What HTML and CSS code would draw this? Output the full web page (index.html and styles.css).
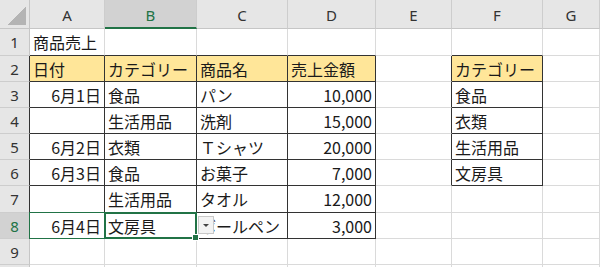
FILE: index.html
```html
<!DOCTYPE html>
<html lang="ja">
<head>
<meta charset="utf-8">
<title>商品売上</title>
<link rel="stylesheet" href="styles.css">
</head>
<body>
<div class="sheet">
  <!-- column headers -->
  <div class="corner"><span class="tri"></span></div>
  <div class="ch">A</div>
  <div class="ch active">B</div>
  <div class="ch">C</div>
  <div class="ch">D</div>
  <div class="ch">E</div>
  <div class="ch">F</div>
  <div class="ch">G</div>

  <!-- row 1 -->
  <div class="rh">1</div>
  <div class="c bb">商品売上</div>
  <div class="c bb"></div>
  <div class="c bb"></div>
  <div class="c bb"></div>
  <div class="c"></div>
  <div class="c bb"></div>
  <div class="c"></div>

  <!-- row 2 -->
  <div class="rh br">2</div>
  <div class="c b head">日付</div>
  <div class="c b head">カテゴリー</div>
  <div class="c b head">商品名</div>
  <div class="c b head">売上金額</div>
  <div class="c br"></div>
  <div class="c b head">カテゴリー</div>
  <div class="c"></div>

  <!-- row 3 -->
  <div class="rh br">3</div>
  <div class="c b num">6月1日</div>
  <div class="c b">食品</div>
  <div class="c b">パン</div>
  <div class="c b num">10,000</div>
  <div class="c br"></div>
  <div class="c b">食品</div>
  <div class="c"></div>

  <!-- row 4 -->
  <div class="rh br">4</div>
  <div class="c b num"></div>
  <div class="c b">生活用品</div>
  <div class="c b">洗剤</div>
  <div class="c b num">15,000</div>
  <div class="c br"></div>
  <div class="c b">衣類</div>
  <div class="c"></div>

  <!-- row 5 -->
  <div class="rh br">5</div>
  <div class="c b num">6月2日</div>
  <div class="c b">衣類</div>
  <div class="c b">Ｔシャツ</div>
  <div class="c b num">20,000</div>
  <div class="c br"></div>
  <div class="c b">生活用品</div>
  <div class="c"></div>

  <!-- row 6 -->
  <div class="rh br">6</div>
  <div class="c b num">6月3日</div>
  <div class="c b">食品</div>
  <div class="c b">お菓子</div>
  <div class="c b num">7,000</div>
  <div class="c br"></div>
  <div class="c b">文房具</div>
  <div class="c"></div>

  <!-- row 7 -->
  <div class="rh br">7</div>
  <div class="c b num"></div>
  <div class="c b">生活用品</div>
  <div class="c b">タオル</div>
  <div class="c b num">12,000</div>
  <div class="c"></div>
  <div class="c"></div>
  <div class="c"></div>

  <!-- row 8 -->
  <div class="rh br active">8</div>
  <div class="c b num">6月4日</div>
  <div class="c b">文房具</div>
  <div class="c b">ボールペン</div>
  <div class="c b num">3,000</div>
  <div class="c"></div>
  <div class="c"></div>
  <div class="c"></div>

  <!-- row 9 -->
  <div class="rh">9</div>
  <div class="c"></div>
  <div class="c"></div>
  <div class="c"></div>
  <div class="c"></div>
  <div class="c"></div>
  <div class="c"></div>
  <div class="c"></div>

  <!-- row 10 (partly visible) -->
  <div class="rh"></div>
  <div class="c"></div>
  <div class="c"></div>
  <div class="c"></div>
  <div class="c"></div>
  <div class="c"></div>
  <div class="c"></div>
  <div class="c"></div>

  <!-- selection A8:B8, active cell B8 -->
  <div class="range"></div>
  <div class="cursor"><span class="handle"></span></div>
  <!-- list drop-down for B8 -->
  <div class="dropdown"><span class="arrow"></span></div>
</div>
</body>
</html>
```

FILE: styles.css
```css
html, body {
  margin: 0;
  padding: 0;
  background: #ffffff;
}

.sheet {
  position: relative;
  display: grid;
  grid-template-columns: 30px 75px 92px 91px 88px 76px 91px 1fr;
  grid-template-rows: 29px 27px 26px 26px 26px 26px 26px 27px 26px 26px 26px;
  width: 600px;
  height: 267px;
  overflow: hidden;
  font-family: "Noto Sans CJK JP", "Noto Sans", sans-serif;
  font-size: 16px;
  color: #1a1a1a;
}

/* header cells */
.corner {
  background: #e6e6e6;
  border-right: 1px solid #c6c6c6;
  border-bottom: 1px solid #c6c6c6;
  display: flex;
  align-items: flex-end;
  justify-content: flex-end;
  padding: 0 3px 3px 0;
  box-sizing: border-box;
}
.tri {
  width: 18px;
  height: 18px;
  background: linear-gradient(to top left, #b4b4b4 50%, transparent 50%);
}

.ch {
  background: #e6e6e6;
  border-right: 1px solid #cdcdcd;
  border-bottom: 1px solid #c6c6c6;
  box-sizing: border-box;
  display: flex;
  align-items: center;
  justify-content: center;
  font-family: "Noto Sans", sans-serif;
  font-size: 15px;
  color: #333333;
  padding-top: 1px;
}
.ch.active {
  background: #d2d2d2;
  color: #217346;
  border-bottom: 2px solid #217346;
  padding-top: 2px;
}

.rh {
  background: #e6e6e6;
  border-right: 1px solid #c6c6c6;
  border-bottom: 1px solid #cdcdcd;
  box-sizing: border-box;
  display: flex;
  align-items: center;
  justify-content: center;
  font-family: "Noto Sans", sans-serif;
  font-size: 15px;
  color: #333333;
}
.rh.active {
  background: #d2d2d2;
  color: #217346;
}

/* worksheet cells */
.c {
  border-right: 1px solid #dadada;
  border-bottom: 1px solid #dadada;
  box-sizing: border-box;
  display: flex;
  align-items: center;
  padding: 0 3px 0 3px;
  white-space: nowrap;
  overflow: hidden;
}
.c.num {
  justify-content: flex-end;
}
.c.head {
  background: #ffe699;
}

/* ruled borders */
.b {
  border-right: 1px solid #333333;
  border-bottom: 1px solid #333333;
}
.br {
  border-right: 1px solid #333333;
}
.bb {
  border-bottom: 1px solid #333333;
}

/* selection overlays, laid over the cells of row 8 */
.range {
  position: absolute;
  grid-column: 2 / 4;
  grid-row: 9 / 10;
  top: -1px;
  left: -1px;
  right: 0;
  bottom: 0;
  border: 1px solid #217346;
  pointer-events: none;
}
.cursor {
  position: absolute;
  grid-column: 3 / 4;
  grid-row: 9 / 10;
  top: -1px;
  left: -1px;
  right: 0;
  bottom: 0;
  border: 2px solid #217346;
  pointer-events: none;
}
.handle {
  position: absolute;
  right: -4px;
  bottom: -4px;
  width: 5px;
  height: 5px;
  background: #217346;
  border: 1px solid #ffffff;
}

.dropdown {
  position: absolute;
  grid-column: 4 / 5;
  grid-row: 9 / 10;
  top: 3px;
  left: 1px;
  width: 16px;
  height: 18px;
  background: #f3f3f3;
  border: 1px solid #c8c8c8;
  box-sizing: border-box;
  display: flex;
  align-items: center;
  justify-content: center;
}
.arrow {
  width: 0;
  height: 0;
  border-left: 3px solid transparent;
  border-right: 3px solid transparent;
  border-top: 3px solid #444444;
}
```
